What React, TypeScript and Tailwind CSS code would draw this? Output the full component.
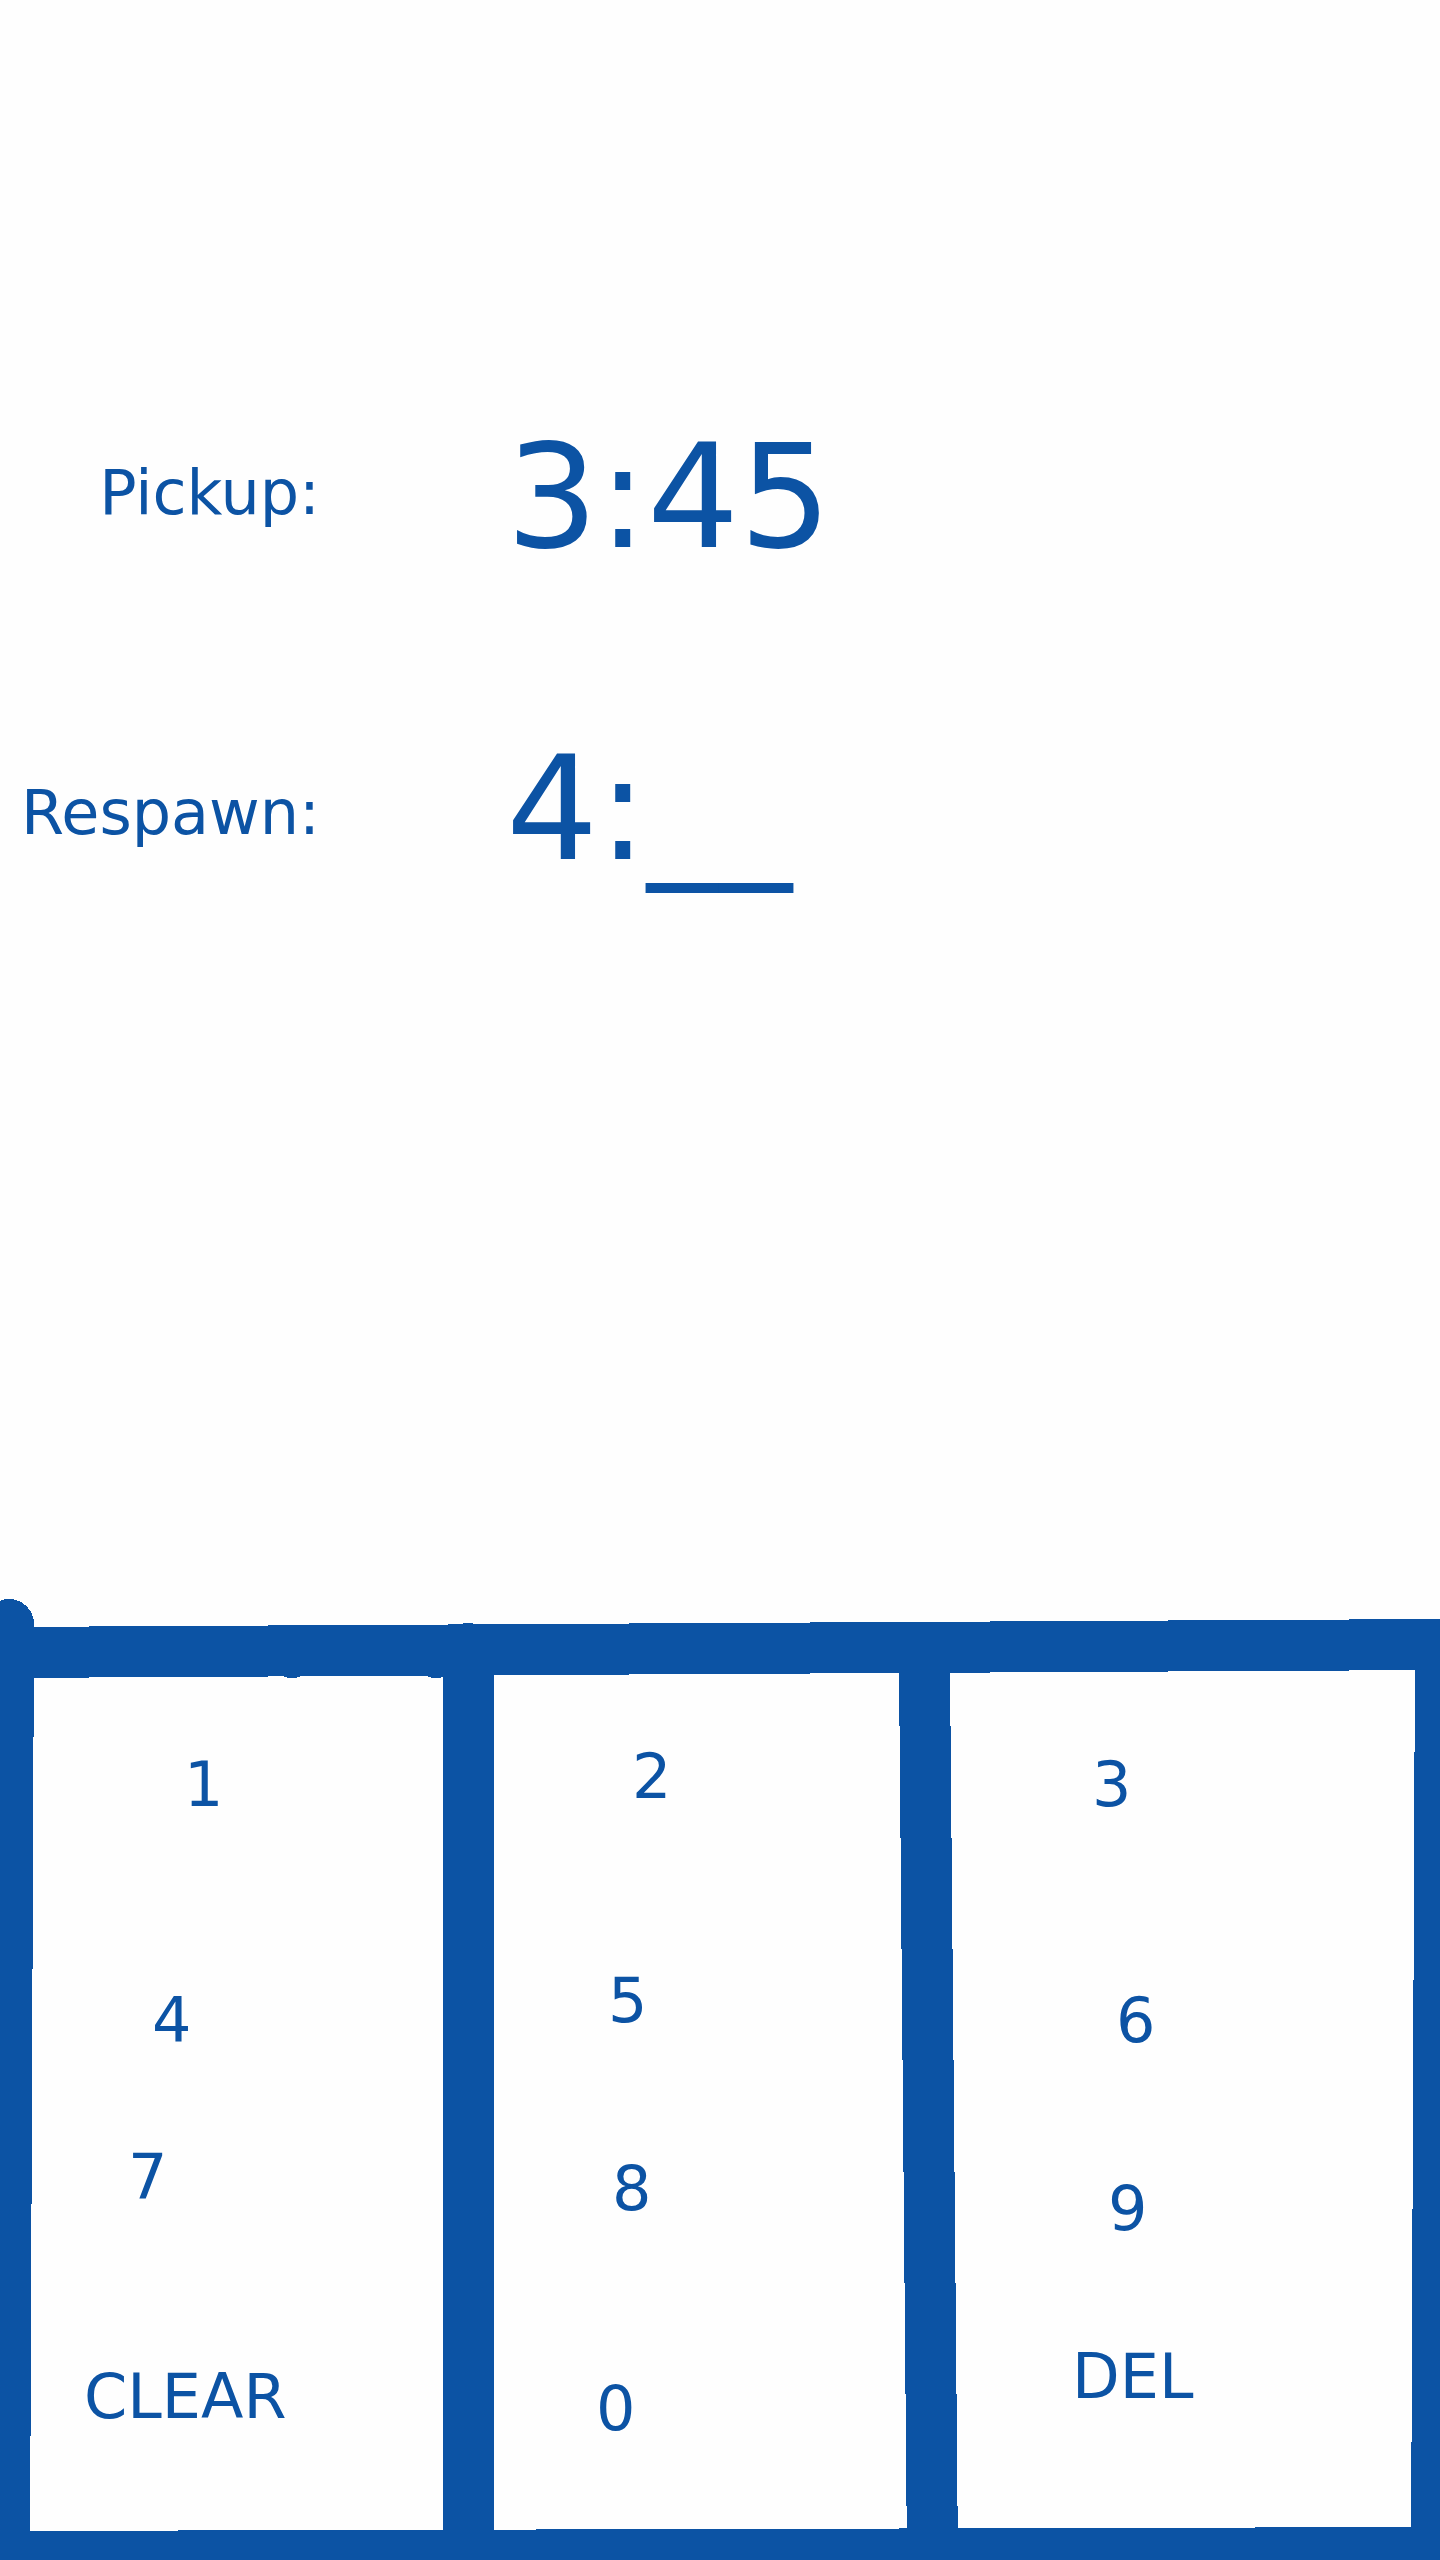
import { useState } from "react";

type Key = { label: string; place: string };

const columns: Key[][] = [
  [
    { label: "1", place: "mt-36 pl-[184px]" },
    { label: "4", place: "mt-39 pl-[152px]" },
    { label: "7", place: "mt-19 pl-[128px]" },
    { label: "CLEAR", place: "mt-35 pl-[84px]" },
  ],
  [
    { label: "2", place: "mt-34 pl-[164px]" },
    { label: "5", place: "mt-36 pl-[140px]" },
    { label: "8", place: "mt-27 pl-[144px]" },
    { label: "0", place: "mt-35 pl-[128px]" },
  ],
  [
    { label: "3", place: "mt-36 pl-[167px]" },
    { label: "6", place: "mt-39 pl-[191px]" },
    { label: "9", place: "mt-27 pl-[183px]" },
    { label: "DEL", place: "mt-22 pl-[147px]" },
  ],
];

function formatTime(digits: string) {
  const padded = digits.padEnd(3, "_");
  return `${padded[0]}:${padded.slice(1)}`;
}

/* Brush-stroke frame around and between the keypad columns. */
function KeypadFrame() {
  return (
    <svg
      aria-hidden="true"
      className="pointer-events-none absolute inset-0 h-full w-full overflow-visible"
      viewBox="0 1601 1440 959"
      preserveAspectRatio="none"
      fill="currentColor"
      shapeRendering="crispEdges"
    >
      <circle cx="9" cy="1624" r="25" />
      <polygon points="0,1627 1440,1619 1440,1670 0,1678" />
      <circle cx="292" cy="1653" r="25" />
      <circle cx="436" cy="1653" r="25" />
      <circle cx="468" cy="1648" r="25" />
      <polygon points="0,1624 34,1624 30,2560 0,2560" />
      <polygon points="443,1650 494,1650 494,2560 443,2560" />
      <polygon points="899,1670 950,1670 958,2560 907,2560" />
      <polygon points="1415,1640 1440,1640 1440,2560 1411,2560" />
      <polygon points="0,2531 1440,2527 1440,2560 0,2560" />
    </svg>
  );
}

export default function App() {
  const [respawn, setRespawn] = useState("4");

  const press = (key: string) => {
    if (key === "CLEAR") setRespawn("");
    else if (key === "DEL") setRespawn((v) => v.slice(0, -1));
    else setRespawn((v) => (v.length < 3 ? v + key : v));
  };

  return (
    <main className="flex min-h-screen flex-col justify-between bg-[#fefefe] font-['DejaVu_Sans',sans-serif] text-[#0c53a4]">
      <section className="flex">
        <div className="flex w-80 flex-col items-end gap-60 pt-[453px] text-[62px] leading-[80px]">
          <label htmlFor="pickup">Pickup:</label>
          <label htmlFor="respawn">Respawn:</label>
        </div>
        <div className="flex flex-col gap-38 pt-[417px] pl-[186px] text-[145px] leading-[160px]">
          <output id="pickup">3:45</output>
          <output id="respawn">{formatTime(respawn)}</output>
        </div>
      </section>

      <section aria-label="Keypad" className="relative">
        <KeypadFrame />
        <div className="relative grid grid-cols-[468fr_457fr_515fr] pb-[111px]">
          {columns.map((keys) => (
            <div key={keys[0].label} className="flex flex-col">
              {keys.map(({ label, place }) => (
                <div key={label} className={place}>
                  <button
                    type="button"
                    onClick={() => press(label)}
                    className="block cursor-pointer text-[62px] leading-[80px]"
                  >
                    {label}
                  </button>
                </div>
              ))}
            </div>
          ))}
        </div>
      </section>
    </main>
  );
}
